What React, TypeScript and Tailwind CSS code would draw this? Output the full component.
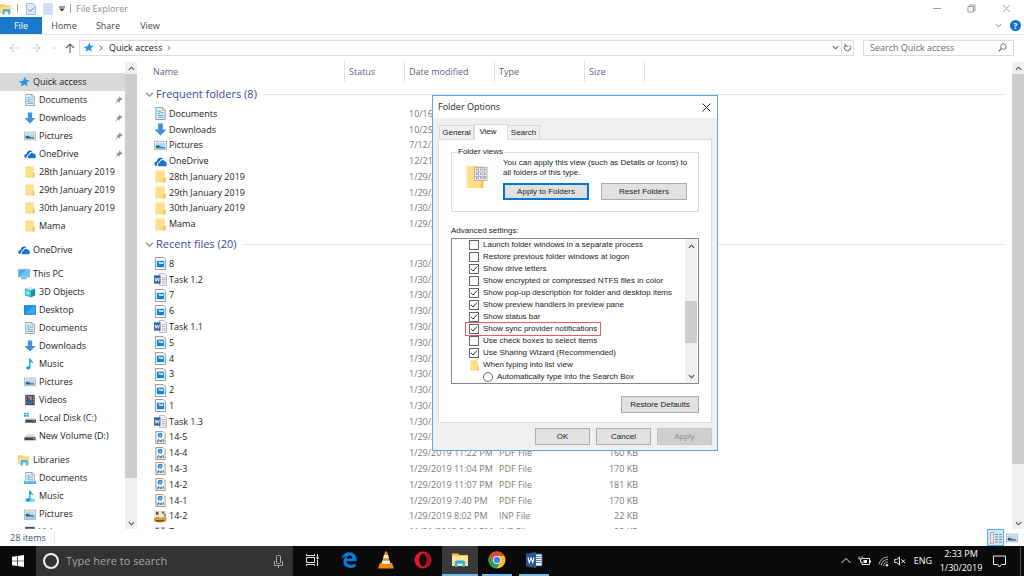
import type { ReactNode } from "react";
import clsx from "clsx";

type IconName =
  | "doc" | "down" | "pic" | "cloud" | "folder" | "pc" | "cube" | "desktop" | "music" | "video"
  | "diskC" | "diskD" | "lib" | "libdoc" | "libmusic" | "libpic" | "star" | "image" | "word" | "pdf" | "inp";

const DocShape = () => (
  <>
    <path d="M2 .5h7.500l2.500 2.500v10.500H2z" fill="#eef2f4" stroke="#8d979e" />
    <path d="M9 .5v3h3" fill="none" stroke="#8d979e" strokeWidth=".8" />
    <path d="M3.500 4.500h4M3.500 7h3M7 6h3.500M4 9h6.500M4 11h6.500" stroke="#5fb6e2" strokeWidth="1.200" />
    <path d="M5.500 3v5" stroke="#7cc6ea" />
  </>
);

const PicShape = () => (
  <>
    <rect x=".5" y="2.500" width="13" height="9" fill="#f4f6f8" stroke="#a9b2b8" />
    <rect x="2" y="4" width="10" height="6" fill="#b5d6ef" />
    <path d="M2 10V6.800l3 .2 3 1.500 4 .2V10z" fill="#2e5f72" />
    <path d="M2 10l4-1h6v1z" fill="#4b9bd1" />
  </>
);

const NoteShape = () => (
  <path d="M6 .5h1.600c.3 2.400 3.600 3.200 3.200 6.500-.4-1.400-1.500-2.200-3.200-2.400v6.600c0 1.500-1.500 2.500-3.200 2.300-1.500-.2-2.100-1.300-1.700-2.300.5-1.200 2-1.700 3.300-1.300z" fill="#12a0ea" />
);

const LibShape = () => (
  <>
    <path d="M0 1.500h5l1 1.500h7v9H0z" fill="#f7cf62" />
    <path d="M1 4.500h12V12H1z" fill="#fbe391" />
    <path d="M3 13.500V9c0-1.500.7-2 2-2h5c1.300 0 2 .5 2 2v4.500H9.500V10h-4v3.500z" fill="#4db5e6" />
  </>
);

const FolderShape = () => (
  <>
    <path d="M1.500.5h10v13h-10z" fill="#fddf88" />
    <path d="M1.500.5h1v13h-1z" fill="#ffeab0" />
    <path d="M10 8.500l2.500-1v6H10z" fill="#f3c65a" />
  </>
);

const shapes: Record<IconName, ReactNode> = {
  doc: <DocShape />,
  pic: <PicShape />,
  music: <NoteShape />,
  folder: <FolderShape />,
  lib: <LibShape />,
  down: <path d="M4.500.5h5V7h4L7 13.500.5 7h4z" fill="#3a94dd" />,
  cloud: (
    <>
      <path d="M1 11.500c-1.500-2.500 0-4.500 2-4.500C3.500 3.500 7 1.500 10 4 7.500 4 6 5.500 5.300 7.500c-2 .3-2.500 2.500-2 4z" fill="#0b6cc4" />
      <path d="M4.800 12c-1.300-1.700-.2-3.800 1.500-3.800C6.800 5.500 10 4.300 11.500 6.800c2.200.2 3.200 3.200 1.500 5.200z" fill="#0f76d4" />
    </>
  ),
  pc: (
    <>
      <rect x=".5" y="1.500" width="13" height="9" fill="#3fb2f5" stroke="#9fb0bb" />
      <path d="M1 10L10 2h3v8z" fill="#68c8fa" />
      <path d="M3 13h8l-1.500-2h-5z" fill="#9aa6ad" />
    </>
  ),
  cube: (
    <>
      <path d="M1 3l6-2 6 2-6 2z" fill="#b8eef2" />
      <path d="M1 3l7 2v8.500l-7-2.500z" fill="#3cc1cf" />
      <path d="M13 3L8 5v8.500l5-2.500z" fill="#1c93aa" />
      <path d="M2.500 5.500l4 1.200v4l-4-1.200z" fill="#8fe4ea" />
    </>
  ),
  desktop: (
    <>
      <rect x=".5" y="2" width="13" height="10" fill="#1a93ee" stroke="#1377c9" />
      <path d="M1 11.500L11 2.500h2v9z" fill="#37a9f7" />
    </>
  ),
  video: (
    <>
      <rect x="1.500" y="1" width="11" height="12" fill="#3c3f45" />
      <path d="M2.700 2v10M11.300 2v10" stroke="#c8cbd0" strokeWidth="1" strokeDasharray="1 1" />
      <rect x="4" y="2" width="6" height="3" fill="#4c7fc0" />
      <rect x="4" y="5.500" width="6" height="3" fill="#3b5fa8" />
      <path d="M4 9h6v3H4z" fill="#50698c" />
      <path d="M6 3h3v4H7z" fill="#d38b45" />
    </>
  ),
  diskC: (
    <>
      <path d="M0 1h2.300v2H0zM2.800 1h2.700v2H2.800zM0 3.500h2.300v2H0zM2.800 3.500h2.700v2H2.800z" fill="#22aeea" />
      <path d="M3 7h9l2 2H1.500z" fill="#d5d8da" />
      <rect x="1.500" y="9" width="12.500" height="3.500" fill="#41464a" />
      <rect x="11" y="10" width="2" height="1.200" fill="#7ee07e" />
    </>
  ),
  diskD: (
    <>
      <path d="M3 5h8l2.500 3.500H.5z" fill="#d5d8da" />
      <rect x=".5" y="8.500" width="13" height="3.500" fill="#41464a" />
      <rect x="10.500" y="9.500" width="2" height="1.200" fill="#7ee07e" />
    </>
  ),
  libdoc: (
    <>
      <DocShape />
      <path d="M0 14v-3.500h2V12h10v-1.500h2V14z" fill="#45aee2" />
    </>
  ),
  libmusic: (
    <>
      <path d="M1 14l1-4h10l1.500 4z" fill="#8dd0f0" />
      <NoteShape />
    </>
  ),
  libpic: (
    <>
      <PicShape />
      <path d="M0 14v-2.500h14V14z" fill="#8dd0f0" />
    </>
  ),
  star: <path d="M8.500 1l.8 3.500 4.200.5-3.200 2.700.9 4.300L7.500 10 3.500 12.500l.8-4L.5 6.800l5-1.300z" fill="#2596e6" />,
  image: (
    <>
      <path d="M1.500.5H10L12.500 3v10.500h-11z" fill="#fff" stroke="#8b9197" />
      <rect x="3" y="4" width="8" height="7" fill="#1683dc" />
      <path d="M4.500 5h2L7 6l3-1v2.500H6z" fill="#cfe8fa" />
    </>
  ),
  word: (
    <>
      <path d="M6 .5h5L13.500 3v10.500H6z" fill="#f5f5f5" stroke="#b3b6b9" />
      <path d="M8.500 5h4M8.500 7h4M8.500 9h4M8.500 11h4" stroke="#a0a4a8" strokeWidth=".8" />
      <rect x="0" y="2.500" width="7" height="9" fill="#3c63a3" />
      <path d="M1.200 5l1 4L3.500 5.500 4.800 9l1-4" fill="none" stroke="#fff" strokeWidth=".9" />
    </>
  ),
  pdf: (
    <>
      <path d="M2 .5h7.500L12 3v10.500H2z" fill="#fff" stroke="#8b9197" />
      <path d="M4.500 4.500h4.200c-.2-2.500-4.200-2.500-4.200.2 0 2 2.500 2.200 3.800 1.300" fill="none" stroke="#1683dc" strokeWidth="1.300" />
      <path d="M4 12.500v-3h1.500V11H4M8.500 9v2.500h-2V10h2M10 12V9.500h1" fill="none" stroke="#555" strokeWidth=".8" />
    </>
  ),
  inp: (
    <>
      <rect x="0" y="1" width="14" height="12" fill="#f1ead4" />
      <path d="M2 2h3v3H2zM8 1.500h3L10 5z" fill="#5b5f52" />
      <path d="M0 9l4-2 4 1.500L13 6v6l-6 1.500L0 12z" fill="#c9a23e" />
      <path d="M2 11h9v1.500H2z" fill="#4d442b" />
      <path d="M11 3l2 2-2 2z" fill="#3c8ea8" />
    </>
  ),
};

const Icon = ({ name, className }: { name: IconName; className?: string }) => (
  <svg viewBox="0 0 14 14" className={clsx("shrink-0", className ?? "size-3")} aria-hidden="true">
    {shapes[name]}
  </svg>
);

const Chevron = ({ dir = "down", className }: { dir?: "up" | "down" | "right"; className?: string }) => (
  <svg viewBox="0 0 8 8" className={clsx("shrink-0", className ?? "size-2")} aria-hidden="true">
    <path
      d={{ up: "M1 5.500L4 2.500l3 3", down: "M1 2.500l3 3 3-3", right: "M2.500 1l3 3-3 3" }[dir]}
      fill="none"
      stroke="currentColor"
      strokeWidth="1.300"
    />
  </svg>
);

const Pin = () => (
  <svg viewBox="0 0 10 10" className="mr-0.5 ml-auto size-2 shrink-0" aria-hidden="true">
    <path d="M5.500.5l4 4-1 .5-.7-.3L6 6.500 5.700 8.500 3.800 6.700 1 9.500l-.5-.5L3 6 1.500 4.300l2-.3 2-2-.5-.7z" fill="#8a969f" />
  </svg>
);

interface NavItem {
  label: string;
  icon: IconName;
  pinned?: boolean;
}

interface NavGroup extends NavItem {
  children?: NavItem[];
}

const navGroups: NavGroup[] = [
  {
    label: "Quick access",
    icon: "star",
    children: [
      { label: "Documents", icon: "doc", pinned: true },
      { label: "Downloads", icon: "down", pinned: true },
      { label: "Pictures", icon: "pic", pinned: true },
      { label: "OneDrive", icon: "cloud", pinned: true },
      { label: "28th January 2019", icon: "folder" },
      { label: "29th January 2019", icon: "folder" },
      { label: "30th January 2019", icon: "folder" },
      { label: "Mama", icon: "folder" },
    ],
  },
  { label: "OneDrive", icon: "cloud" },
  {
    label: "This PC",
    icon: "pc",
    children: [
      { label: "3D Objects", icon: "cube" },
      { label: "Desktop", icon: "desktop" },
      { label: "Documents", icon: "doc" },
      { label: "Downloads", icon: "down" },
      { label: "Music", icon: "music" },
      { label: "Pictures", icon: "pic" },
      { label: "Videos", icon: "video" },
      { label: "Local Disk (C:)", icon: "diskC" },
      { label: "New Volume (D:)", icon: "diskD" },
    ],
  },
  {
    label: "Libraries",
    icon: "lib",
    children: [
      { label: "Documents", icon: "libdoc" },
      { label: "Music", icon: "libmusic" },
      { label: "Pictures", icon: "libpic" },
      { label: "Videos", icon: "video" },
    ],
  },
];

type FileRow = [icon: IconName, name: string, date: string, type?: string, size?: string];

const frequent: FileRow[] = [
  ["doc", "Documents", "10/16/2018"],
  ["down", "Downloads", "10/25/2018"],
  ["pic", "Pictures", "7/12/2018"],
  ["cloud", "OneDrive", "12/21/2018"],
  ["folder", "28th January 2019", "1/29/2019"],
  ["folder", "29th January 2019", "1/29/2019"],
  ["folder", "30th January 2019", "1/30/2019"],
  ["folder", "Mama", "1/29/2019"],
];

const recent: FileRow[] = [
  ["image", "8", "1/30/2019"],
  ["word", "Task 1.2", "1/30/2019"],
  ["image", "7", "1/30/2019"],
  ["image", "6", "1/30/2019"],
  ["word", "Task 1.1", "1/30/2019"],
  ["image", "5", "1/30/2019"],
  ["image", "4", "1/30/2019"],
  ["image", "3", "1/30/2019"],
  ["image", "2", "1/30/2019"],
  ["image", "1", "1/30/2019"],
  ["word", "Task 1.3", "1/30/2019"],
  ["pdf", "14-5", "1/29/2019"],
  ["pdf", "14-4", "1/29/2019 11:22 PM", "PDF File", "160 KB"],
  ["pdf", "14-3", "1/29/2019 11:04 PM", "PDF File", "170 KB"],
  ["pdf", "14-2", "1/29/2019 11:07 PM", "PDF File", "181 KB"],
  ["pdf", "14-1", "1/29/2019 7:40 PM", "PDF File", "170 KB"],
  ["inp", "14-2", "1/29/2019 8:02 PM", "INP File", "22 KB"],
  ["inp", "7", "11/21/2018 2:04 PM", "INP File", "22 KB"],
];

const columns = "grid grid-cols-[208px_60px_90px_90px_60px]";

function TitleBar() {
  return (
    <header className="flex h-[17px] shrink-0 items-center text-[#8f8f8f]">
      <Icon name="lib" />
      <span className="ml-[5px] h-[9px] w-px bg-[#a8a8a8]" />
      <svg viewBox="0 0 10 12" className="ml-2 h-3 w-2.5" aria-hidden="true">
        <path d="M.5.5h7l2 2v9h-9z" fill="#dfe9fa" stroke="#a9b9d9" />
        <path d="M2.500 6.500l2 2 3.500-4" fill="none" stroke="#5b86d0" />
      </svg>
      <svg viewBox="0 0 10 12" className="ml-[7px] h-3 w-2.5" aria-hidden="true">
        <path d="M.5.5h9v11h-9z" fill="#cfdcf3" stroke="#d7e0f2" />
      </svg>
      <svg viewBox="0 0 6 6" className="ml-1.5 size-1.5" aria-hidden="true">
        <path d="M0 .5h6v1H0zM.3 2.500h5.400L3 5.500z" fill="#333" />
      </svg>
      <span className="mx-[5px] h-[9px] w-px bg-[#a8a8a8]" />
      <h1 className="grow">File Explorer</h1>
      <button aria-label="Minimize" className="flex w-[34px] justify-center">
        <span className="h-px w-2 bg-[#999]" />
      </button>
      <button aria-label="Restore" className="flex w-[34px] justify-center">
        <svg viewBox="0 0 9 9" className="size-[9px]" aria-hidden="true">
          <path d="M1 2.500h5.500V8H1zM2.500 2.500V1H8v5.500H6.500" fill="none" stroke="#999" />
        </svg>
      </button>
      <button aria-label="Close" className="flex w-[36px] justify-center">
        <svg viewBox="0 0 9 9" className="size-[9px]" aria-hidden="true">
          <path d="M1 1l7 7M8 1L1 8" stroke="#999" strokeWidth=".9" />
        </svg>
      </button>
    </header>
  );
}

function RibbonTabs() {
  return (
    <div className="flex h-[18px] shrink-0 items-stretch border-b border-[#e3e3e3] text-[#444]">
      <button className="w-[42px] bg-[#1979ca] text-white">File</button>
      <button className="w-11">Home</button>
      <button className="w-11">Share</button>
      <button className="w-10">View</button>
      <div className="ml-auto flex items-center gap-2 pr-[3px] text-[#aaa]">
        <button aria-label="Expand ribbon">
          <Chevron className="block size-[7px]" />
        </button>
        <button aria-label="Help" className="size-[11px] rounded-full bg-[#0f74d1] text-[8px] leading-[11px] font-bold text-white">
          ?
        </button>
      </div>
    </div>
  );
}

const Arrow = ({ d, className }: { d: string; className: string }) => (
  <svg viewBox="0 0 10 10" className={clsx("block size-2.5", className)} aria-hidden="true">
    <path d={d} fill="none" stroke="currentColor" strokeWidth="1.200" />
  </svg>
);

function AddressBar() {
  return (
    <div className="flex h-[25px] shrink-0 items-center pr-2.5 pl-[9px]">
      <button aria-label="Back"><Arrow className="text-[#d5d5d5]" d="M10 5H1M5 1L1 5l4 4" /></button>
      <button aria-label="Forward" className="ml-3"><Arrow className="text-[#d5d5d5]" d="M0 5h9M5 1l4 4-4 4" /></button>
      <button aria-label="Recent locations" className="ml-2.5 text-[#d5d5d5]"><Chevron className="block size-1.5" /></button>
      <button aria-label="Up" className="ml-2"><Arrow className="text-[#666]" d="M5 10V1M1 5l4-4 4 4" /></button>
      <div className="ml-1 flex h-4 grow items-center border border-[#dcdcdc] pl-[3px]">
        <Icon name="star" className="size-[11px]" />
        <Chevron dir="right" className="ml-1 size-1.5 text-[#555]" />
        <span className="ml-[5px] text-[#222]">Quick access</span>
        <Chevron dir="right" className="ml-1 size-1.5 text-[#555]" />
        <button aria-label="Previous locations" className="mr-0.5 ml-auto text-[#666]">
          <Chevron className="block size-[7px]" />
        </button>
        <button aria-label="Refresh" className="flex h-full w-3 items-center justify-center border-l border-[#dcdcdc]">
          <svg viewBox="0 0 9 9" className="size-[9px]" aria-hidden="true">
            <path d="M2.500 2.200A3.200 3.200 0 1 0 6.500 2.200M2.200.7v2.500h2.500" fill="none" stroke="#666" />
          </svg>
        </button>
      </div>
      <label className="ml-[9px] flex h-4 w-[151px] items-center border border-[#dcdcdc] px-1.5">
        <input type="text" aria-label="Search Quick access" placeholder="Search Quick access" className="w-full min-w-0 outline-none placeholder:text-[#6d6d6d]" />
        <svg viewBox="0 0 10 10" className="size-[9px] shrink-0" aria-hidden="true">
          <circle cx="6" cy="4" r="3" fill="none" stroke="#666" />
          <path d="M4 6L.7 9.300" stroke="#666" strokeWidth="1.400" />
        </svg>
      </label>
    </div>
  );
}

const ScrollTrack = ({ thumb }: { thumb: string }) => (
  <div className="mt-[2px] flex w-3 shrink-0 flex-col bg-[#f0f0f0] text-[#555]">
    <span className="flex h-3 shrink-0 items-center justify-center"><Chevron dir="up" className="size-[7px]" /></span>
    <div className="flex grow flex-col"><span className={clsx("bg-[#cdcdcd]", thumb)} /></div>
    <span className="flex h-3 shrink-0 items-center justify-center"><Chevron className="size-[7px]" /></span>
  </div>
);

const NavLink = ({ item, level, selected }: { item: NavItem; level: 1 | 2; selected?: boolean }) => (
  <a
    href="#"
    className={clsx(
      "flex h-[18px] items-center",
      level === 2 ? "gap-[3px] pl-6" : "gap-[3px] pl-[18px]",
      selected && "bg-[#d9d9d9]",
    )}
  >
    <Icon name={item.icon} />
    <span className="whitespace-nowrap">{item.label}</span>
    {item.pinned && <Pin />}
  </a>
);

function Sidebar() {
  return (
    <nav className="flex w-[125px] shrink-0 flex-col gap-1.5 overflow-hidden pt-[13px] text-[#222]">
      {navGroups.map((group, i) => (
        <div key={group.label}>
          <NavLink item={group} level={1} selected={i === 0} />
          {group.children?.map((item) => <NavLink key={item.label} item={item} level={2} />)}
        </div>
      ))}
    </nav>
  );
}

const FileGroup = ({ title, rows, height }: { title: string; rows: FileRow[]; height: string }) => (
  <>
    <tbody className="block">
      <tr className="block">
        <th className="flex h-6 items-center gap-0.5 pr-1.5 pl-2 text-left text-[11px] font-normal text-[#3a4a9f]">
          <Chevron className="size-[9px] text-[#999]" />
          <span>{title}</span>
          <span className="ml-1 h-px grow bg-[#e8e8e8]" />
        </th>
      </tr>
    </tbody>
    <tbody className={clsx("grid auto-rows-fr", height)}>
      {rows.map(([icon, name, date, type, size], i) => (
        <tr key={i} className={clsx(columns, "items-center text-[#7a7a7a]")}>
          <td className="flex items-center gap-0.5 pl-[17px] text-[#222]">
            <Icon name={icon} className="size-[13px]" />
            {name}
          </td>
          <td />
          <td className="pl-1 whitespace-nowrap">{date}</td>
          <td className="pl-1">{type}</td>
          <td className="pr-[7px] text-right">{size}</td>
        </tr>
      ))}
    </tbody>
  </>
);

function FileList() {
  return (
    <main className="min-w-0 grow overflow-hidden pt-px">
      <table className="block">
        <thead className="block">
          <tr className={clsx(columns, "h-[21px] text-[#5a6580]")}>
            {["Name", "Status", "Date modified", "Type", "Size"].map((label, i) => (
              <th
                key={label}
                className={clsx("border-r border-[#e2e2e2] text-left leading-[21px] font-normal whitespace-nowrap", i ? "pl-1" : "pl-4")}
              >
                {label}
              </th>
            ))}
          </tr>
        </thead>
        <FileGroup title="Frequent folders (8)" rows={frequent} height="h-[126px]" />
        <FileGroup title="Recent files (20)" rows={recent} height="h-[284px]" />
      </table>
    </main>
  );
}

function StatusBar() {
  return (
    <footer className="flex h-[17px] shrink-0 items-center pr-1 pl-2.5 text-[#3a4d75]">
      <span className="border-r border-[#e8e8e8] pr-2">28 items</span>
      <button aria-label="Details view" className="ml-auto flex size-[17px] items-center justify-center border border-[#4fb4dd] bg-[#cdeaf6]">
        <svg viewBox="0 0 12 12" className="size-3" aria-hidden="true">
          <path d="M.5.500h3v11h-3z" fill="#f5e9e6" stroke="#b08f8a" strokeWidth=".7" />
          <path d="M5 2.500h3M9 2.500h3M5 5h3M9 5h3M5 7.500h3M9 7.500h3M5 10h3M9 10h3" stroke="#5f6f78" strokeWidth=".8" />
        </svg>
      </button>
      <button aria-label="Large icons view" className="mx-0.5">
        <Icon name="pic" className="block size-3" />
      </button>
    </footer>
  );
}

const settings = [
  { label: "Launch folder windows in a separate process", on: false },
  { label: "Restore previous folder windows at logon", on: false },
  { label: "Show drive letters", on: true },
  { label: "Show encrypted or compressed NTFS files in color", on: false },
  { label: "Show pop-up description for folder and desktop items", on: true },
  { label: "Show preview handlers in preview pane", on: true },
  { label: "Show status bar", on: true },
  { label: "Show sync provider notifications", on: true, marked: true },
  { label: "Use check boxes to select items", on: false },
  { label: "Use Sharing Wizard (Recommended)", on: true },
];

const DialogButton = ({ children, className, disabled }: { children: ReactNode; className: string; disabled?: boolean }) => (
  <button disabled={disabled} className={clsx("h-[17px]", className, disabled ? "border border-[#c4c4c4] bg-[#cfcfcf] text-[#8d8d8d]" : "bg-[#e1e1e1]")}>
    {children}
  </button>
);

function FolderOptions() {
  return (
    <section
      role="dialog"
      aria-label="Folder Options"
      className="absolute top-[95px] left-[432px] flex h-[356px] w-[286px] flex-col border border-[#5ca9e4] bg-[#f0f0f0] px-[5px] font-['Liberation_Sans',Arial,sans-serif] text-[8px] leading-[10px] text-[#222]"
    >
      <div className="-mx-[5px] flex h-[22px] shrink-0 items-center justify-between bg-white px-[5px] font-['Open_Sans','Noto_Sans',sans-serif] text-[9px]">
        <h2>Folder Options</h2>
        <button aria-label="Close" className="mr-px">
          <svg viewBox="0 0 9 9" className="block size-[9px]" aria-hidden="true">
            <path d="M.5.500l8 8M8.500.500l-8 8" stroke="#333" />
          </svg>
        </button>
      </div>

      <div role="tablist" className="mt-[5px] flex h-4 shrink-0 items-end">
        <button role="tab" className="ml-px h-3.5 w-[35px] border border-b-0 border-[#d9d9d9]">General</button>
        <button role="tab" aria-selected="true" className="z-10 -mb-px h-4 w-[34px] border border-b-0 border-[#d9d9d9] bg-white pr-1.5 pb-0.5">View</button>
        <button role="tab" className="h-3.5 w-8 border border-b-0 border-l-0 border-[#d9d9d9]">Search</button>
      </div>

      <div className="flex h-[284px] flex-col border border-[#dcdcdc] bg-white px-3 pt-[7px]">
        <fieldset className="flex h-[65px] min-w-0 shrink-0 border border-[#dcdcdc] pl-3.5">
          <legend className="-ml-[9px] px-px">Folder views</legend>
          <svg viewBox="0 0 22 24" className="mt-2 h-6 w-[22px] shrink-0" aria-hidden="true">
            <path d="M0 1h17v22H0z" fill="#fddf88" />
            <path d="M0 1h2v22H0z" fill="#ffeab0" />
            <path d="M14.500 14l3-1v10h-3z" fill="#f3c65a" />
            <rect x="8.500" y="2.500" width="12.500" height="13" fill="#f3f3f3" stroke="#b4b4b4" />
            <path d="M12.500 2.500v13M17 2.500v13M8.500 7h12.500M8.500 11.500h12.500" stroke="#b4b4b4" />
            <path d="M10 4.500h1.500M14 4.500h1.500M18 9h1.500M10 13h1.500M18 13h1.500" stroke="#b06a6a" strokeWidth="1.500" />
            <path d="M18 4.500h1.500M10 9h1.500M14 9h1.500M14 13h1.500" stroke="#5689b5" strokeWidth="1.500" />
          </svg>
          <div className="ml-[15px] pt-px">
            <p className="whitespace-nowrap">
              You can apply this view (such as Details or Icons) to
              <br />
              all folders of this type.
            </p>
            <div className="mt-[5px] flex gap-3">
              <DialogButton className="w-[86px] border-2 border-[#0078d7]">Apply to Folders</DialogButton>
              <DialogButton className="w-[86px] border border-[#adadad]">Reset Folders</DialogButton>
            </div>
          </div>
        </fieldset>

        <h3 className="mt-3.5">Advanced settings:</h3>
        <div className="mt-0.5 flex h-[146px] shrink-0 border border-[#828790]">
          <ul className="grow overflow-hidden">
            {settings.map(({ label, on, marked }) => (
              <li key={label} className="flex h-3 items-center">
                <label className={clsx("ml-3.5 flex items-center gap-1 px-[3px] whitespace-nowrap", marked && "outline outline-1 outline-[#ee5a62]")}>
                  <span className="relative flex size-2.5">
                    <input type="checkbox" defaultChecked={on} className="peer size-2.5 appearance-none border border-[#666] bg-white" />
                    <svg viewBox="0 0 10 10" className="pointer-events-none absolute inset-0 hidden size-2.5 peer-checked:block" aria-hidden="true">
                      <path d="M2 5l2 2 4-4.500" fill="none" stroke="#333" />
                    </svg>
                  </span>
                  <span className="leading-3">{label}</span>
                </label>
              </li>
            ))}
            <li className="flex h-3 items-center gap-[3px] pl-[17px]">
              <Icon name="folder" className="size-[11px]" />
              When typing into list view
            </li>
            <li className="flex h-3 items-center pl-[31px]">
              <label className="flex items-center gap-1">
                <input type="radio" name="typing" className="size-2.5 appearance-none rounded-full border border-[#666]" />
                Automatically type into the Search Box
              </label>
            </li>
          </ul>
          <div className="mr-px flex w-3 shrink-0 flex-col bg-[#f0f0f0] text-[#444]">
            <span className="flex h-3.5 items-center justify-center"><Chevron dir="up" className="size-[7px]" /></span>
            <span className="mt-12 h-[42px] bg-[#cdcdcd]" />
            <span className="mt-auto flex h-3.5 items-center justify-center"><Chevron className="size-[7px]" /></span>
          </div>
        </div>

        <DialogButton className="mt-3 w-[78px] self-end border border-[#adadad]">Restore Defaults</DialogButton>
      </div>

      <div className="mt-[5px] flex justify-end gap-1.5">
        <DialogButton className="w-[55px] border border-[#adadad]">OK</DialogButton>
        <DialogButton className="w-[55px] border border-[#adadad]">Cancel</DialogButton>
        <DialogButton className="w-[55px]" disabled>Apply</DialogButton>
      </div>
    </section>
  );
}

const TaskItem = ({ label, children, state }: { label: string; children: ReactNode; state?: "open" | "active" }) => (
  <button aria-label={label} className={clsx("flex w-9 flex-col items-center", state === "active" && "bg-[#3a3a3a]")}>
    <span className="flex grow items-center">{children}</span>
    <span className={clsx("h-0.5 shrink-0", state && "bg-[#76b9ed]", state === "active" ? "w-full" : "w-[30px]")} />
  </button>
);

function Taskbar() {
  return (
    <div className="flex h-[30px] shrink-0 items-stretch bg-[#0a0a0a] text-white">
      <button aria-label="Start" className="flex w-9 items-center justify-center">
        <svg viewBox="0 0 12 12" className="size-3" aria-hidden="true">
          <path d="M0 1.700L5.200 1v4.700H0zM5.900.9L12 0v5.700H5.900zM0 6.300h5.200V11L0 10.300zM5.900 6.300H12V12l-6.100-.9z" fill="#fff" />
        </svg>
      </button>
      <label className="flex w-[257px] items-center bg-[#333] pr-2.5 pl-[7px]">
        <span className="size-4 shrink-0 rounded-full border-2 border-[#f0f0f0]" />
        <input type="text" aria-label="Type here to search" placeholder="Type here to search" className="ml-[7px] min-w-0 grow text-[11px] outline-none placeholder:text-[#a5a5a5]" />
        <svg viewBox="0 0 9 13" className="h-[13px] w-[9px] shrink-0" aria-hidden="true">
          <rect x="2.500" y=".5" width="4" height="8" rx="1" fill="none" stroke="#aaa" />
          <path d="M.5 6v4.500h8V6M4.500 10.500V13" fill="none" stroke="#aaa" />
        </svg>
      </label>

      <div className="ml-px flex gap-px">
        <TaskItem label="Task View">
          <svg viewBox="0 0 14 14" className="size-3.5" fill="none" stroke="#e6e6e6" aria-hidden="true">
            <path d="M1.500 4.500h8v5h-8zM1.500 1v1.500h8V1M1.500 13v-1.500h8V13M12.500 1v2.500M12.500 6.500V13" />
            <path d="M12.500 3.500v2.500" strokeWidth="2" />
          </svg>
        </TaskItem>
        <TaskItem label="Edge">
          <svg viewBox="0 0 16 16" className="size-4" aria-hidden="true">
            <path d="M.5 7.300C1.200 3 4.300.3 8.200.3c4.600 0 7.300 3.200 7.300 7.300v1.600H5.600c.1 2.400 2.100 3.500 4.500 3.500 1.700 0 3.200-.5 4.500-1.300v3.300c-1.500.8-3.300 1.200-5.200 1.200-4.300 0-7-2.500-7-6.300 0-2.400 1.300-4.400 3.500-5.600C3.600 4.500 1.500 5.800.5 7.300zm5.200-.9h5.600c0-1.800-1-2.800-2.700-2.800S5.900 4.700 5.700 6.400z" fill="#0a7bdc" />
          </svg>
        </TaskItem>
        <TaskItem label="VLC">
          <svg viewBox="0 0 16 18" className="h-[18px] w-4" aria-hidden="true">
            <path d="M2 12h12l2 5.500H0z" fill="#f28a10" />
            <path d="M7 .5h2L12.500 13c-2 1.500-7 1.500-9 0z" fill="#f08519" />
            <path d="M6 4h4l.9 3.200H5.100zM4.300 9.700h7.400l.7 2.500c-2 1-6.800 1-8.800 0z" fill="#f2f2f2" />
          </svg>
        </TaskItem>
        <TaskItem label="Opera">
          <svg viewBox="0 0 18 18" className="size-[18px]" aria-hidden="true">
            <ellipse cx="9" cy="9" rx="8.500" ry="8.500" fill="#e8162b" />
            <ellipse cx="9" cy="9" rx="3.800" ry="6.400" fill="#0a0a0a" />
            <path d="M11 1a8.500 8.500 0 0 1 0 16c3-3 3-13 0-16z" fill="#a80d1e" />
          </svg>
        </TaskItem>
        <TaskItem label="File Explorer" state="active">
          <svg viewBox="0 0 16 14" className="h-3.5 w-4" aria-hidden="true">
            <path d="M0 .5h6L7.500 2H16v11H0z" fill="#f4c44e" />
            <path d="M0 3h16v10H0z" fill="#fde59a" />
            <path d="M3 14V9.500C3 8 3.700 7.500 5 7.500h6c1.300 0 2 .5 2 2V14h-2.500v-3.500h-5V14z" fill="#35a9e1" />
          </svg>
        </TaskItem>
        <TaskItem label="Chrome" state="open">
          <svg viewBox="0 0 18 18" className="size-[18px]" aria-hidden="true">
            <circle cx="9" cy="9" r="8.500" fill="#fbc116" />
            <path d="M9 9L1.600 4.700A8.500 8.500 0 0 1 16.500 5H9z" fill="#dd4a3d" />
            <path d="M9 9l-3.500 2L1.600 4.700A8.500 8.500 0 0 0 8.500 17.500L12.500 11z" fill="#2a9d57" />
            <path d="M1.600 4.700L5 10.500 9 5z" fill="#dd4a3d" />
            <circle cx="9" cy="9" r="4" fill="#fff" />
            <circle cx="9" cy="9" r="3.200" fill="#4584f0" />
          </svg>
        </TaskItem>
        <TaskItem label="Word" state="open">
          <svg viewBox="0 0 18 16" className="h-4 w-[18px]" aria-hidden="true">
            <path d="M9 2h8v12H9z" fill="#fff" stroke="#2b579a" />
            <path d="M11 4.500h5M11 6.500h5M11 8.500h5M11 10.500h5" stroke="#2b579a" strokeWidth=".8" />
            <path d="M1 1.800L11 0v16L1 14.200z" fill="#2b579a" />
            <path d="M3 5.500l1.300 5L6 6l1.700 4.500L9 5.500" fill="none" stroke="#fff" strokeWidth="1.100" />
          </svg>
        </TaskItem>
      </div>

      <div className="ml-auto flex items-center">
        <button aria-label="Show hidden icons">
          <svg viewBox="0 0 10 10" className="block size-2.5" aria-hidden="true">
            <path d="M.5 7L5 2.500 9.500 7" fill="none" stroke="#eee" />
          </svg>
        </button>
        <svg viewBox="0 0 13 10" className="ml-[7px] h-2.5 w-[13px]" fill="none" stroke="#eee" aria-hidden="true">
          <path d="M4.500 2.500H11.500v6H4V6M12.500 4.500v2M1 .5v2.500h3V.5M2.500 3.500V6H4" />
          <path d="M5.500 4h3.500v3H5.500z" fill="#eee" stroke="none" />
        </svg>
        <svg viewBox="0 0 11 11" className="ml-[7px] size-[11px]" fill="none" stroke="#aaa" aria-hidden="true">
          <path d="M1 8.500A9 9 0 0 1 10 1M3.200 9.500A6.500 6.500 0 0 1 10 3.500M5.500 10A4.500 4.500 0 0 1 10 6" />
          <circle cx="9" cy="9.200" r=".9" fill="#eee" stroke="#eee" />
        </svg>
        <svg viewBox="0 0 12 10" className="ml-[5px] h-2.5 w-3" fill="none" stroke="#eee" aria-hidden="true">
          <path d="M.7 3.500h2L5.500 1v8L2.700 6.500h-2zM7.500 3.500l3.500 3.500M11 3.500L7.500 7" />
        </svg>
        <span className="ml-2">ENG</span>
        <time dateTime="2019-01-30T14:33" className="ml-[7px] w-11 text-center leading-[14px] whitespace-nowrap">
          2:33 PM
          <br />
          1/30/2019
        </time>
        <button aria-label="Notifications" className="ml-2.5">
          <svg viewBox="0 0 13 13" className="block size-[13px]" aria-hidden="true">
            <path d="M.5 1h12v8.500H8.500l-2 2.500-2-2.500h-4z" fill="none" stroke="#eee" />
          </svg>
        </button>
        <span className="ml-3.5 h-full w-1 border-l border-[#4a4a4a]" />
      </div>
    </div>
  );
}

export default function App() {
  return (
    <div className="relative flex h-screen flex-col overflow-hidden bg-white font-['Open_Sans','Noto_Sans',sans-serif] text-[9px] leading-3">
      <TitleBar />
      <RibbonTabs />
      <AddressBar />
      <div className="flex min-h-0 grow">
        <Sidebar />
        <ScrollTrack thumb="h-[404px]" />
        <FileList />
        <ScrollTrack thumb="h-[390px]" />
      </div>
      <StatusBar />
      <Taskbar />
      <FolderOptions />
    </div>
  );
}
